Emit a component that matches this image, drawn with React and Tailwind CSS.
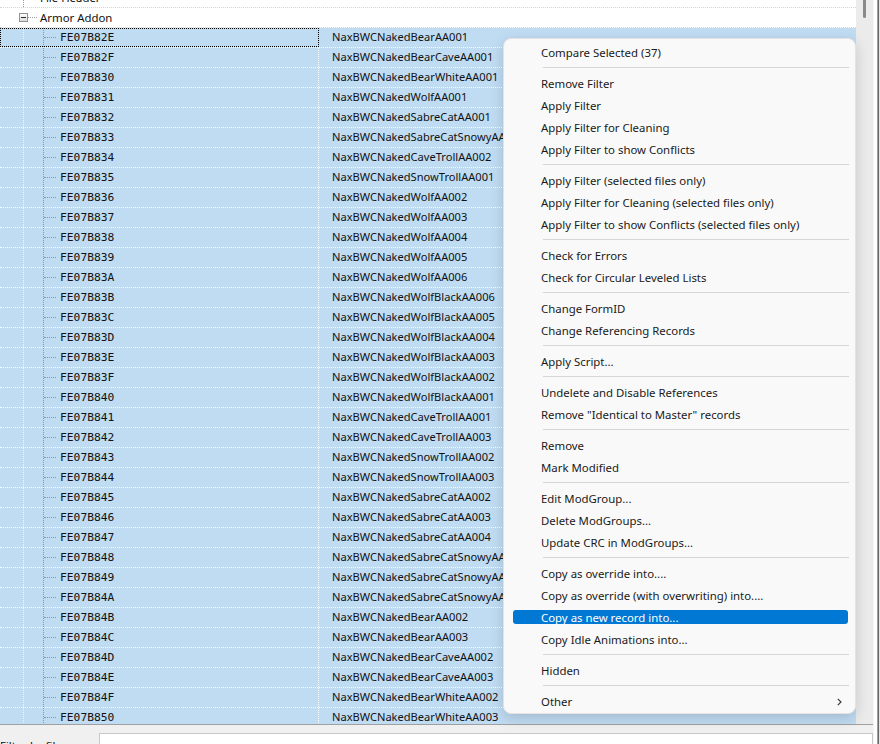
import React from 'react';

const records = [
  ['FE07B82E', 'NaxBWCNakedBearAA001'],
  ['FE07B82F', 'NaxBWCNakedBearCaveAA001'],
  ['FE07B830', 'NaxBWCNakedBearWhiteAA001'],
  ['FE07B831', 'NaxBWCNakedWolfAA001'],
  ['FE07B832', 'NaxBWCNakedSabreCatAA001'],
  ['FE07B833', 'NaxBWCNakedSabreCatSnowyAA001'],
  ['FE07B834', 'NaxBWCNakedCaveTrollAA002'],
  ['FE07B835', 'NaxBWCNakedSnowTrollAA001'],
  ['FE07B836', 'NaxBWCNakedWolfAA002'],
  ['FE07B837', 'NaxBWCNakedWolfAA003'],
  ['FE07B838', 'NaxBWCNakedWolfAA004'],
  ['FE07B839', 'NaxBWCNakedWolfAA005'],
  ['FE07B83A', 'NaxBWCNakedWolfAA006'],
  ['FE07B83B', 'NaxBWCNakedWolfBlackAA006'],
  ['FE07B83C', 'NaxBWCNakedWolfBlackAA005'],
  ['FE07B83D', 'NaxBWCNakedWolfBlackAA004'],
  ['FE07B83E', 'NaxBWCNakedWolfBlackAA003'],
  ['FE07B83F', 'NaxBWCNakedWolfBlackAA002'],
  ['FE07B840', 'NaxBWCNakedWolfBlackAA001'],
  ['FE07B841', 'NaxBWCNakedCaveTrollAA001'],
  ['FE07B842', 'NaxBWCNakedCaveTrollAA003'],
  ['FE07B843', 'NaxBWCNakedSnowTrollAA002'],
  ['FE07B844', 'NaxBWCNakedSnowTrollAA003'],
  ['FE07B845', 'NaxBWCNakedSabreCatAA002'],
  ['FE07B846', 'NaxBWCNakedSabreCatAA003'],
  ['FE07B847', 'NaxBWCNakedSabreCatAA004'],
  ['FE07B848', 'NaxBWCNakedSabreCatSnowyAA002'],
  ['FE07B849', 'NaxBWCNakedSabreCatSnowyAA003'],
  ['FE07B84A', 'NaxBWCNakedSabreCatSnowyAA004'],
  ['FE07B84B', 'NaxBWCNakedBearAA002'],
  ['FE07B84C', 'NaxBWCNakedBearAA003'],
  ['FE07B84D', 'NaxBWCNakedBearCaveAA002'],
  ['FE07B84E', 'NaxBWCNakedBearCaveAA003'],
  ['FE07B84F', 'NaxBWCNakedBearWhiteAA002'],
  ['FE07B850', 'NaxBWCNakedBearWhiteAA003'],
];

// context menu groups, a separator goes between each
const menuGroups = [
  ['Compare Selected (37)'],
  ['Remove Filter', 'Apply Filter', 'Apply Filter for Cleaning', 'Apply Filter to show Conflicts'],
  [
    'Apply Filter (selected files only)',
    'Apply Filter for Cleaning (selected files only)',
    'Apply Filter to show Conflicts (selected files only)',
  ],
  ['Check for Errors', 'Check for Circular Leveled Lists'],
  ['Change FormID', 'Change Referencing Records'],
  ['Apply Script...'],
  ['Undelete and Disable References', 'Remove "Identical to Master" records'],
  ['Remove', 'Mark Modified'],
  ['Edit ModGroup...', 'Delete ModGroups...', 'Update CRC in ModGroups...'],
  [
    'Copy as override into....',
    'Copy as override (with overwriting) into....',
    'Copy as new record into...',
    'Copy Idle Animations into...',
  ],
  ['Hidden'],
  ['Other'],
];

const uiFont = "font-['Noto_Sans',sans-serif]";
const monoFont = "font-['DejaVu_Sans_Mono',monospace]";

const RecordRow = ({ id, name, focused }) => (
  <div className="flex h-[20px] shrink-0 border-b border-dotted border-white bg-[#c0dcf3]">
    <div
      className={
        'flex w-[319px] shrink-0 items-stretch border-r border-dotted border-white ' +
        (focused ? 'outline-1 -outline-offset-1 outline-dotted outline-black' : '')
      }
    >
      <div className="w-[23px] shrink-0" />
      <div className="w-[20px] shrink-0 border-l border-dotted border-[#eef5fc]" />
      <div className="flex shrink-0 items-center border-l border-dotted border-[#8a96a3]">
        <div className="w-[12px] border-t border-dotted border-[#8a96a3]" />
      </div>
      <span className={`${monoFont} ml-[4px] self-center text-[11.3px] leading-none text-[#111]`}>{id}</span>
    </div>
    <div className={`${uiFont} flex items-center whitespace-nowrap pl-[13px] text-[11.1px] text-[#111]`}>{name}</div>
  </div>
);

const Expander = () => (
  <div className="flex h-[9px] w-[9px] shrink-0 items-center justify-center border border-[#919191] bg-gradient-to-b from-white to-[#dcdcdc]">
    <div className="h-px w-[5px] bg-[#2a2a2a]" />
  </div>
);

const MenuItem = ({ label, active, submenu }) => (
  <div className="flex h-[22px] items-center">
    <div
      className={
        'ml-[9px] mr-[7px] flex h-[14px] flex-1 items-center justify-between rounded-[3px] pl-[28px] pr-[6px] ' +
        (active ? 'bg-[#0078d4] text-white' : 'text-[#1a1a1a]')
      }
    >
      <span className="whitespace-nowrap pt-px leading-none">{label}</span>
      {submenu && (
        <svg width="5" height="8" viewBox="0 0 5 8" className="mt-[2px]">
          <path d="M0.8 0.8 L4 4 L0.8 7.2" fill="none" stroke="#3a3a3a" strokeWidth="1.2" />
        </svg>
      )}
    </div>
  </div>
);

const ContextMenu = () => (
  <div
    className={`${uiFont} absolute left-[503px] top-[38px] w-[353px] rounded-[8px] border border-[#e3e3e3] bg-[#f9f9f9] pb-[1px] pt-[2px] text-[11.4px] shadow-[0_4px_14px_rgba(0,0,0,0.16)]`}
  >
    {menuGroups.map((group, gi) => (
      <div key={gi}>
        {gi > 0 && (
          <div className="flex h-[9px] items-center">
            <div className="ml-[39px] mr-[6px] h-px flex-1 bg-[#d6d6d6]" />
          </div>
        )}
        {group.map((label) => (
          <MenuItem
            key={label}
            label={label}
            active={label === 'Copy as new record into...'}
            submenu={label === 'Other'}
          />
        ))}
      </div>
    ))}
  </div>
);

export default function App() {
  return (
    <div className="relative flex h-[744px] w-[880px] overflow-hidden bg-[#f0f0f0]">
      <div className="flex w-[873px] flex-col">
        {/* record tree */}
        <div className="flex h-[724px] shrink-0">
          <div className="w-[856px] overflow-hidden bg-white">
            <div className="-mt-[12px] flex flex-col">
              <div className="flex h-[20px] shrink-0 border-b border-dotted border-[#d4d4d4]">
                <div className="w-[23px] shrink-0" />
                <div className="flex w-[14px] shrink-0 items-center border-l border-dotted border-[#9a9a9a]">
                  <div className="w-full border-t border-dotted border-[#9a9a9a]" />
                </div>
                <span className={`${uiFont} ml-[3px] self-center text-[11.4px] text-[#111]`}>File Header</span>
              </div>
              <div className="flex h-[20px] shrink-0 border-b border-dotted border-[#d4d4d4]">
                <div className="flex w-[37px] shrink-0 items-center pl-[19px]">
                  <Expander />
                  <div className="w-[9px] border-t border-dotted border-[#9a9a9a]" />
                </div>
                <span className={`${uiFont} ml-[3px] self-center text-[11.4px] text-[#111]`}>Armor Addon</span>
              </div>
              {records.map(([id, name], i) => (
                <RecordRow key={id} id={id} name={name} focused={i === 0} />
              ))}
            </div>
          </div>
          {/* vertical scrollbar */}
          <div className="w-[17px] shrink-0 bg-[#ebebeb]">
            <div className="ml-[7px] h-[18px] w-[3px] rounded-b-full bg-[#8a8a8a]" />
          </div>
        </div>
        {/* filter bar */}
        <div className={`${uiFont} flex h-[20px] shrink-0 items-start overflow-hidden border-t border-[#a0a0a0] text-[11.4px] text-[#111]`}>
          <span className="mt-[12px] whitespace-nowrap">Filter by filename:</span>
          <div className="ml-[4px] mt-[8px] h-[24px] flex-1 border border-[#c8c8c8] bg-white pl-[3px] pt-[3px]">worn</div>
        </div>
      </div>
      {/* window frame */}
      <div className="flex w-[7px] shrink-0">
        <div className="w-[4px] border-l border-[#f6f6f6] bg-white" />
        <div className="w-px bg-[#a0a0a0]" />
        <div className="w-px bg-[#6a6a6a]" />
        <div className="w-px bg-[#e2e2e2]" />
      </div>
      <ContextMenu />
    </div>
  );
}
